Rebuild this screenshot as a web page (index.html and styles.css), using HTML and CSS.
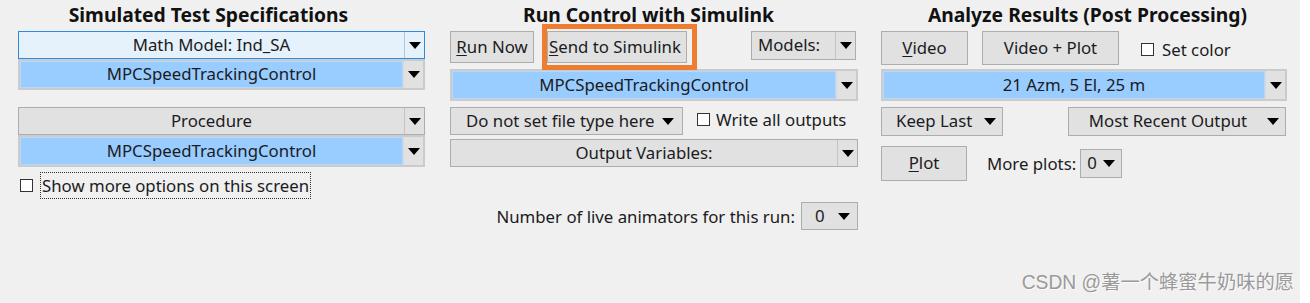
FILE: index.html
```html
<!DOCTYPE html>
<html>
<head>
<meta charset="utf-8">
<link rel="stylesheet" href="styles.css">
</head>
<body>
<div class="app">
  <section class="col col1">
    <h2 class="title t1">Simulated Test Specifications</h2>
    <div class="dd dd-focus h28"><span class="dd-label">Math Model: Ind_SA</span><span class="dd-arrow sep"><i class="tri"></i></span></div>
    <div class="dd dd-sel h31"><span class="dd-label">MPCSpeedTrackingControl</span><span class="dd-arrow"><i class="tri"></i></span></div>
    <div class="dd dd-plain h28 mt17"><span class="dd-label">Procedure</span><span class="dd-arrow sep"><i class="tri"></i></span></div>
    <div class="dd dd-sel h32"><span class="dd-label">MPCSpeedTrackingControl</span><span class="dd-arrow"><i class="tri"></i></span></div>
    <label class="check check-main"><span class="box"></span><span class="focus">Show more options on this screen</span></label>
  </section>

  <section class="col col2">
    <h2 class="title t2">Run Control with Simulink</h2>
    <div class="row r1">
      <button class="btn run"><u>R</u>un Now</button>
      <div class="annot"><button class="btn send"><u>S</u>end to Simulink</button></div>
      <div class="dd dd-plain models"><span class="dd-label">Models:</span><span class="dd-arrow sep"><i class="tri"></i></span></div>
    </div>
    <div class="dd dd-sel h32 mt6"><span class="dd-label">MPCSpeedTrackingControl</span><span class="dd-arrow"><i class="tri"></i></span></div>
    <div class="row r3">
      <div class="dd dd-plain filetype"><span class="dd-label">Do not set file type here</span><span class="dd-arrow"><i class="tri"></i></span></div>
      <label class="check check-write"><span class="box"></span><span>Write all outputs</span></label>
    </div>
    <div class="dd dd-plain h28 mt4"><span class="dd-label">Output Variables:</span><span class="dd-arrow sep"><i class="tri"></i></span></div>
    <div class="row animators">
      <span class="lbl">Number of live animators for this run:</span>
      <div class="dd dd-plain small zero"><span class="dd-label">0</span><span class="dd-arrow"><i class="tri"></i></span></div>
    </div>
  </section>

  <section class="col col3">
    <h2 class="title t3">Analyze Results (Post Processing)</h2>
    <div class="row r1b">
      <button class="btn video"><u>V</u>ideo</button>
      <button class="btn vplot">Video + Plot</button>
      <label class="check check-color"><span class="box"></span><span>Set color</span></label>
    </div>
    <div class="dd dd-sel h32 mt4"><span class="dd-label">21 Azm, 5 El, 25 m</span><span class="dd-arrow"><i class="tri"></i></span></div>
    <div class="row r3b">
      <div class="dd dd-plain keep"><span class="dd-label">Keep Last</span><span class="dd-arrow"><i class="tri"></i></span></div>
      <div class="dd dd-plain recent"><span class="dd-label">Most Recent Output</span><span class="dd-arrow"><i class="tri"></i></span></div>
    </div>
    <div class="row r4b">
      <button class="btn plot"><u>P</u>lot</button>
      <span class="lbl more">More plots:</span>
      <div class="dd dd-plain small zero2"><span class="dd-label">0</span><span class="dd-arrow"><i class="tri"></i></span></div>
    </div>
  </section>

  <div class="watermark">CSDN @薯一个蜂蜜牛奶味的愿</div>
</div>
</body>
</html>
```

FILE: styles.css
```css
* { box-sizing: border-box; }
html, body { margin: 0; padding: 0; background: #ffffff; }
body {
  font-family: "Noto Sans", "Open Sans", sans-serif;
  font-size: 16.8px;
  color: #1b1b22;
  width: 1310px;
  height: 303px;
  overflow: hidden;
}
.app {
  position: relative;
  width: 1300px;
  height: 303px;
  background: #f0f0f0;
  display: flex;
  padding-left: 18px;
}
.col { display: flex; flex-direction: column; }
.col1 { width: 407px; }
.col2 { width: 408px; margin-left: 25px; }
.col3 { width: 406px; margin-left: 23px; }

.title {
  margin: 0;
  height: 31px;
  line-height: 29px;
  font-size: 19.3px;
  font-weight: 700;
  text-align: center;
  color: #111;
  white-space: nowrap;
}
.t1 { padding-right: 26px; }
.t2 { padding-right: 11px; }
.t3 { padding-left: 7px; }

.h28 { height: 28px; }
.h31 { height: 31px; }
.h32 { height: 32px; }
.mt17 { margin-top: 17px; }
.mt6 { margin-top: 6px; }
.mt4 { margin-top: 4px; }

.dd {
  display: flex;
  align-items: stretch;
  border: 1px solid #adadad;
  background: #e1e1e1;
  line-height: 1;
}
.dd-label {
  flex: 1;
  display: flex;
  align-items: center;
  justify-content: center;
  white-space: nowrap;
}
.dd-arrow {
  width: 20px;
  display: flex;
  align-items: center;
  justify-content: center;
}
.dd-arrow.sep { border-left: 1px solid #c4c4c4; }
.tri {
  display: block;
  width: 0; height: 0;
  border-left: 6px solid transparent;
  border-right: 6px solid transparent;
  border-top: 7px solid #000;
}
.dd-focus {
  border-color: #2b8be0;
  background: #e5f1fb;
}
.dd-focus .dd-arrow.sep { border-left-color: #b9c6d1; }
.dd-sel {
  border: 2px solid #cbcbcb;
  background: #e1e1e1;
}
.dd-sel .dd-label {
  background: #99ccff;
  border: 1px solid #b5d8fb;
}
.dd-sel .dd-arrow { width: 20px; border-left: 1px solid #d8d8d8; }

.btn {
  font: inherit;
  color: #1b1b22;
  background: #e1e1e1;
  border: 1px solid #adadad;
  padding: 0;
  line-height: 1;
  white-space: nowrap;
}
.btn u { text-decoration-thickness: 1px; text-underline-offset: 2px; }

.row { display: flex; align-items: flex-start; }

.check { display: flex; align-items: center; white-space: nowrap; }
.box {
  width: 13px; height: 13px;
  background: #fff;
  border: 1px solid #333;
  flex: none;
}
.check-main { margin-top: 5px; height: 27px; padding-left: 2px; }
.check-main .box { margin-right: 7px; }
.focus {
  border: 1px dotted #333;
  height: 27px;
  display: flex;
  align-items: center;
  padding: 0 1px;
}

/* column 2 */
.r1 { height: 32px; }
.run { width: 84px; height: 32px; }
.annot { position: relative; margin-left: 13px; }
.send { width: 140px; height: 32px; display: block; padding-right: 4px; }
.annot::after {
  content: "";
  position: absolute;
  left: -5px; right: -10px; top: -7px; bottom: -7px;
  border: 5px solid #ed7d31;
  pointer-events: none;
}
.models { margin-left: auto; margin-right: 2px; width: 105px; height: 29px; }
.models .dd-label { justify-content: flex-start; padding-left: 6px; }
.r3 { margin-top: 6px; height: 28px; }
.filetype { width: 233px; height: 28px; }
.filetype .dd-label { justify-content: flex-start; padding-left: 15px; }
.filetype .dd-arrow { width: 24px; padding-right: 4px; }
.check-write { margin-left: 14px; margin-top: 1px; align-self: flex-start; }
.check-write .box { margin-right: 6px; }
.animators { margin-top: 35px; justify-content: flex-end; align-items: center; height: 28px; }
.lbl { white-space: nowrap; }
.animators .lbl { margin-right: 6px; }
.small .dd-label { justify-content: flex-start; }
.zero { width: 57px; height: 28px; }
.zero .dd-label { padding-left: 13px; }
.zero .dd-arrow { width: 22px; padding-right: 4px; }

/* column 3 */
.r1b { height: 34px; align-items: center; }
.video { width: 87px; height: 34px; }
.vplot { width: 137px; height: 34px; margin-left: 14px; }
.check-color { margin-left: 22px; margin-top: 2px; }
.check-color .box { margin-right: 8px; }
.r3b { margin-top: 6px; height: 29px; }
.keep { width: 122px; height: 29px; }
.keep .dd-label { justify-content: flex-start; padding-left: 14px; }
.keep .dd-arrow { width: 22px; padding-right: 3px; }
.recent { width: 218px; height: 29px; margin-left: auto; margin-right: 1px; }
.recent .dd-arrow { width: 22px; padding-right: 3px; }
.recent .dd-label { padding-left: 4px; }
.r4b { margin-top: 10px; height: 35px; align-items: center; }
.plot { width: 86px; height: 35px; }
.more { margin-left: 20px; margin-right: 4px; }
.zero2 { width: 42px; height: 29px; }
.zero2 .dd-label { padding-left: 6px; }
.zero2 .dd-arrow { width: 20px; padding-right: 4px; }

.watermark {
  position: absolute;
  right: 6px;
  top: 267px;
  font-family: "Liberation Sans", "Noto Sans CJK SC", sans-serif;
  font-size: 19.3px;
  color: #9a9a9a;
  text-shadow: 1px 1px 0 #fafafa;
  white-space: nowrap;
}
```
